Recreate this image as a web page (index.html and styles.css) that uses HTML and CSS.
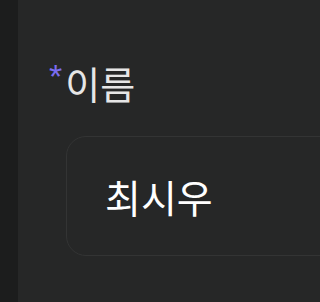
FILE: index.html
```html
<!DOCTYPE html>
<html lang="ko">
<head>
<meta charset="utf-8">
<link rel="stylesheet" href="styles.css">
</head>
<body>
<div class="app">
  <div class="rail"></div>
  <main class="main">
    <label class="label"><span class="req">*</span>이름</label>
    <div class="field">최시우</div>
  </main>
</div>
</body>
</html>
```
FILE: styles.css
```css
html, body {
  margin: 0;
  padding: 0;
  background: #262727;
  overflow: hidden;
}
body {
  font-family: "Noto Sans CJK KR", "Noto Sans", sans-serif;
  color: #ececec;
}
.app {
  display: flex;
  width: 100%;
  min-width: 302px;
  height: 100vh;
  min-height: 302px;
  overflow: hidden;
}
.rail {
  width: 18px;
  flex: none;
  background: #1c1d1d;
}
.main {
  flex: 1;
  min-width: 0;
  padding: 55px 0 0 31px;
  display: flex;
  flex-direction: column;
}
.label {
  display: flex;
  align-items: flex-start;
  font-size: 38px;
  line-height: 56px;
  color: #e6e6e6;
}
.req {
  font-family: "Liberation Sans", sans-serif;
  color: #7b6cf0;
  font-size: 34px;
  line-height: 34px;
  margin-top: 4px;
  margin-right: 3px;
}
.field {
  width: 400px;
  flex: none;
  margin: 25px 0 0 17px;
  height: 118px;
  border: 1px solid #333434;
  border-radius: 20px;
  background: #262727;
  display: flex;
  align-items: center;
  padding-left: 38px;
  font-size: 39px;
  color: #ffffff;
}
```
